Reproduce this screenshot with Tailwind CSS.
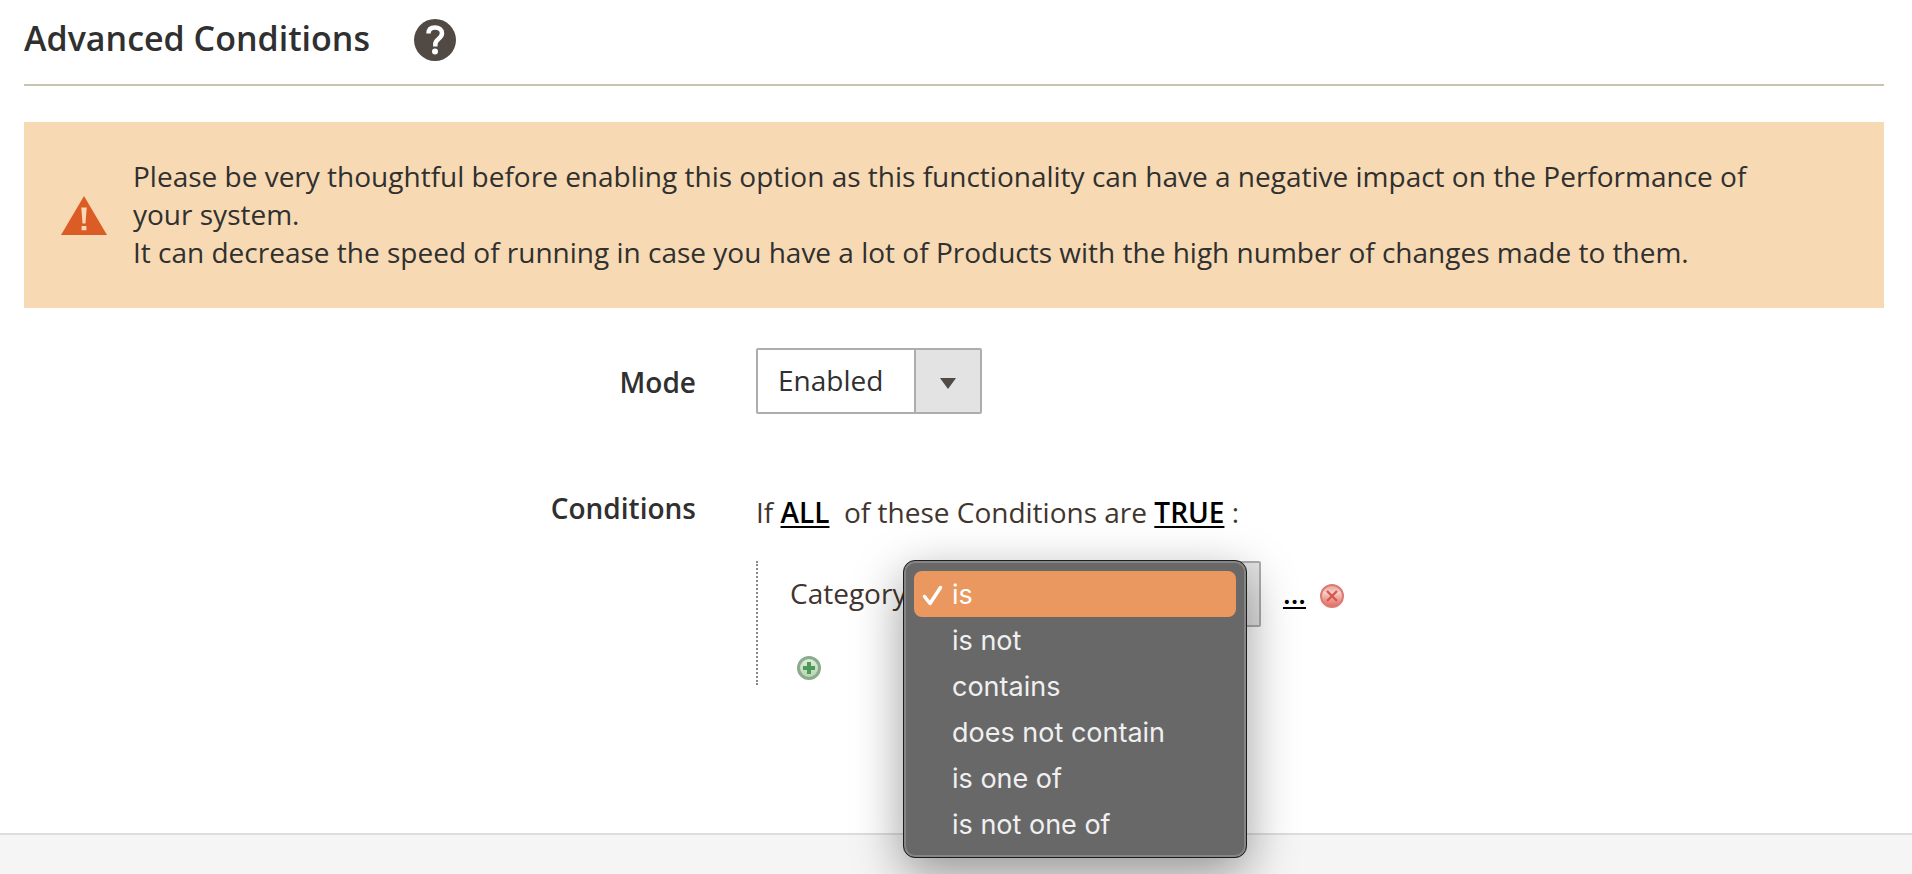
<!DOCTYPE html>
<html lang="en">
<head>
  <meta charset="UTF-8" />
  <meta name="viewport" content="width=device-width, initial-scale=1.0" />
  <title>Advanced Conditions</title>
  <script src="https://cdn.jsdelivr.net/npm/@tailwindcss/browser@4"></script>
</head>
<body class="flex min-h-screen flex-col bg-white font-['Open_Sans',sans-serif] text-[28px] leading-[38px] text-[#303030]">
  <main class="grow px-6 pr-7">
    <!-- Section title -->
    <header class="flex items-center gap-11 border-b-2 border-[#cac3b4] pt-[15px] pb-[23px]">
      <h1 class="text-[34px] leading-[46px] font-semibold">Advanced Conditions</h1>
      <button type="button" aria-label="Help" class="mt-1">
        <svg class="block size-[42px]" viewBox="0 0 42 42" fill="none">
          <circle cx="21" cy="21" r="21" fill="#514943" />
          <path d="M14.500 14.500C14.500 10.500 17 8.500 21 8.500c4 0 7 2.200 7 5.800 0 2.900-1.700 4.300-3.800 6-2.200 1.700-2.900 2.800-2.900 5.200v2" stroke="#fff" stroke-width="4.500" />
          <circle cx="21" cy="32.500" r="3" fill="#fff" />
        </svg>
      </button>
    </header>

    <!-- Warning -->
    <div role="alert" class="mt-9 flex items-center bg-[#f7dab3] pt-[35px] pr-20 pb-[37px] pl-[37px]">
      <svg class="mt-[2px] mr-[26px] h-[39px] w-[46px] shrink-0" viewBox="0 0 46 39">
        <path d="M23 0l23 39H0z" fill="#dc5c25" />
        <path d="M20.300 11.500h5.400l-1.200 16h-3zM20.600 30h4.800v4.200h-4.800z" fill="#f7dab3" />
      </svg>
      <p>
        Please be very thoughtful before enabling this option as this functionality can have a negative impact on the Performance of your system.<br />
        It can decrease the speed of running in case you have a lot of Products with the high number of changes made to them.
      </p>
    </div>

    <form class="mt-10 space-y-[60px]">
      <div class="grid grid-cols-[672fr_1128fr] gap-[60px]">
        <label for="mode" class="pt-[15px] text-right font-semibold">Mode</label>
        <div class="relative w-[226px]">
          <select id="mode" class="block h-[66px] w-full appearance-none rounded-xs border-2 border-[#adadad] bg-white pr-[68px] pb-[2px] pl-5">
            <option>Enabled</option>
            <option>Disabled</option>
          </select>
          <span class="pointer-events-none absolute inset-y-[2px] right-[2px] flex w-[66px] items-center justify-center border-l-2 border-[#adadad] bg-[#e3e3e3]">
            <svg class="mt-1 h-[11px] w-4" viewBox="0 0 16 11"><path d="M0 0h16L8 11z" fill="#514943" /></svg>
          </span>
        </div>
      </div>

      <div class="grid grid-cols-[672fr_1128fr] gap-[60px]">
        <div class="pt-[15px] text-right font-semibold">Conditions</div>
        <div class="pt-[19px] text-[#41362f]">
          <p>If <a href="#" class="font-semibold text-black underline decoration-2 underline-offset-3">ALL</a>&nbsp; of these Conditions are <a href="#" class="font-semibold text-black underline decoration-2 underline-offset-3">TRUE</a> :</p>
          <ul class="mt-[30px] border-l-2 border-dotted border-[#888888] pl-8">
            <li class="flex h-[66px] items-center">
              <label for="operator" class="w-[120px] pb-[2px]">Category</label>
              <div class="relative w-[351px]">
                <select id="operator" class="block h-[66px] w-full appearance-none rounded-xs border-2 border-[#adadad] bg-[#e3e3e3] pl-5">
                  <option>is</option>
                </select>
                <!-- Opened operator list -->
                <div role="listbox" aria-label="Operator" class="absolute -top-px -left-[7px] w-[344px] rounded-xl border border-[#1d1d1d] bg-[#686868] p-[10px] font-[Inter,sans-serif] text-[27px] leading-[46px] text-[#f0f0f0] shadow-[inset_0_0_0_2px_#858585,0_16px_50px_rgba(0,0,0,0.4)]">
                  <div role="option" aria-selected="true" class="flex h-[46px] items-center rounded-lg bg-[#ea9860] pt-[2px] text-white">
                    <svg class="mr-[9px] ml-[8px] h-[21px] w-[21px]" viewBox="0 0 21 21" fill="none" stroke="#fff" stroke-width="3.500" stroke-linecap="round" stroke-linejoin="round"><path d="M2.500 11.500l5.500 7L18.500 2.500" /></svg>is
                  </div>
                  <div role="option" class="h-[46px] pt-px pl-[38px]">is not</div>
                  <div role="option" class="h-[46px] pt-px pl-[38px]">contains</div>
                  <div role="option" class="h-[46px] pt-px pl-[38px]">does not contain</div>
                  <div role="option" class="h-[46px] pt-px pl-[38px]">is one of</div>
                  <div role="option" class="h-[46px] pt-px pl-[38px]">is not one of</div>
                </div>
              </div>
              <a href="#" class="ml-[22px] pb-[2px] font-semibold text-black underline decoration-2 underline-offset-3">...</a>
              <button type="button" aria-label="Remove" class="mt-1 ml-[14px]">
                <svg class="block size-6" viewBox="0 0 24 24">
                  <defs>
                    <linearGradient id="red" x1="0" y1="0" x2="0" y2="1"><stop offset="0" stop-color="#e99d95" /><stop offset="0.350" stop-color="#f6d0cc" /><stop offset="0.600" stop-color="#eea49c" /><stop offset="1" stop-color="#e0695f" /></linearGradient>
                  </defs>
                  <circle cx="12" cy="12" r="11" fill="url(#red)" stroke="#dd7a71" stroke-width="2" />
                  <path d="M7 7l10 10M17 7L7 17" stroke="#d4584d" stroke-width="2.400" />
                </svg>
              </button>
            </li>
            <li class="flex h-[58px] items-start pt-[29px] pl-[7px]">
              <button type="button" aria-label="Add">
                <svg class="block size-6" viewBox="0 0 24 24">
                  <defs>
                    <linearGradient id="green" x1="0" y1="0" x2="0" y2="1"><stop offset="0" stop-color="#e3eee0" /><stop offset="1" stop-color="#b5d3ac" /></linearGradient>
                  </defs>
                  <circle cx="12" cy="12" r="10.500" fill="url(#green)" stroke="#8aac8d" stroke-width="3" />
                  <path d="M10 6h4v4h4v4h-4v4h-4v-4H6v-4h4z" fill="#4d9a5b" />
                </svg>
              </button>
            </li>
          </ul>
        </div>
      </div>
    </form>
  </main>

  <footer class="h-[41px] border-t-2 border-[#dddddd] bg-[#f5f5f5]"></footer>
</body>
</html>
